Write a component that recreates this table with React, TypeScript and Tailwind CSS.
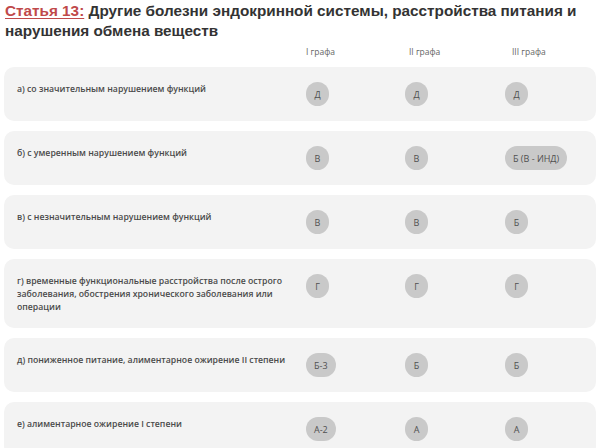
const rows: { label: string; grades: [string, string, string] }[] = [
  { label: "а) со значительным нарушением функций", grades: ["Д", "Д", "Д"] },
  { label: "б) с умеренным нарушением функций", grades: ["В", "В", "Б (В - ИНД)"] },
  { label: "в) с незначительным нарушением функций", grades: ["В", "В", "Б"] },
  {
    label:
      "г) временные функциональные расстройства после острого заболевания, обострения хронического заболевания или операции",
    grades: ["Г", "Г", "Г"],
  },
  {
    label: "д) пониженное питание, алиментарное ожирение II степени",
    grades: ["Б-3", "Б", "Б"],
  },
  { label: "е) алиментарное ожирение I степени", grades: ["А-2", "А", "А"] },
]

function Badge({ text }: { text: string }) {
  return (
    <span className="flex h-[24px] min-w-[23px] items-center justify-center rounded-full bg-[#c9c9c9] px-[8px] text-[9px] leading-none text-[#505050]">
      {text}
    </span>
  )
}

export default function App() {
  return (
    <div className="h-[448px] w-[600px] overflow-hidden bg-white font-['Open_Sans',sans-serif]">
      <h1 className="px-[5px] pt-[1px] font-['Liberation_Sans',Arial,sans-serif] text-[15.3px] font-bold leading-[20px] text-[#333333]">
        <span className="text-[#c0494a] underline decoration-[1px] underline-offset-[2px]">
          Статья 13:
        </span>{" "}
        Другие болезни эндокринной системы, расстройства питания и нарушения
        обмена веществ
      </h1>

      <div className="mt-[5px] grid grid-cols-[306px_103px_103px_88px] text-[8.5px] leading-[12px] text-[#666666]">
        <span />
        <span>I графа</span>
        <span>II графа</span>
        <span>III графа</span>
      </div>

      <div className="mt-[9px] flex flex-col gap-[10px] px-[4px]">
        {rows.map((r) => (
          <div
            key={r.label}
            className="grid min-h-[54px] grid-cols-[289px_99px_100px_89px] items-start rounded-[10px] bg-[#f3f3f3] pt-[15px] pb-[14px] pl-[13px]"
          >
            <p className="pt-[1px] pr-[10px] text-[8.7px] font-semibold leading-[13px] text-[#4a4a4a]">
              {r.label}
            </p>
            {r.grades.map((g, i) => (
              <div key={i} className="flex">
                <Badge text={g} />
              </div>
            ))}
          </div>
        ))}
      </div>
    </div>
  )
}
